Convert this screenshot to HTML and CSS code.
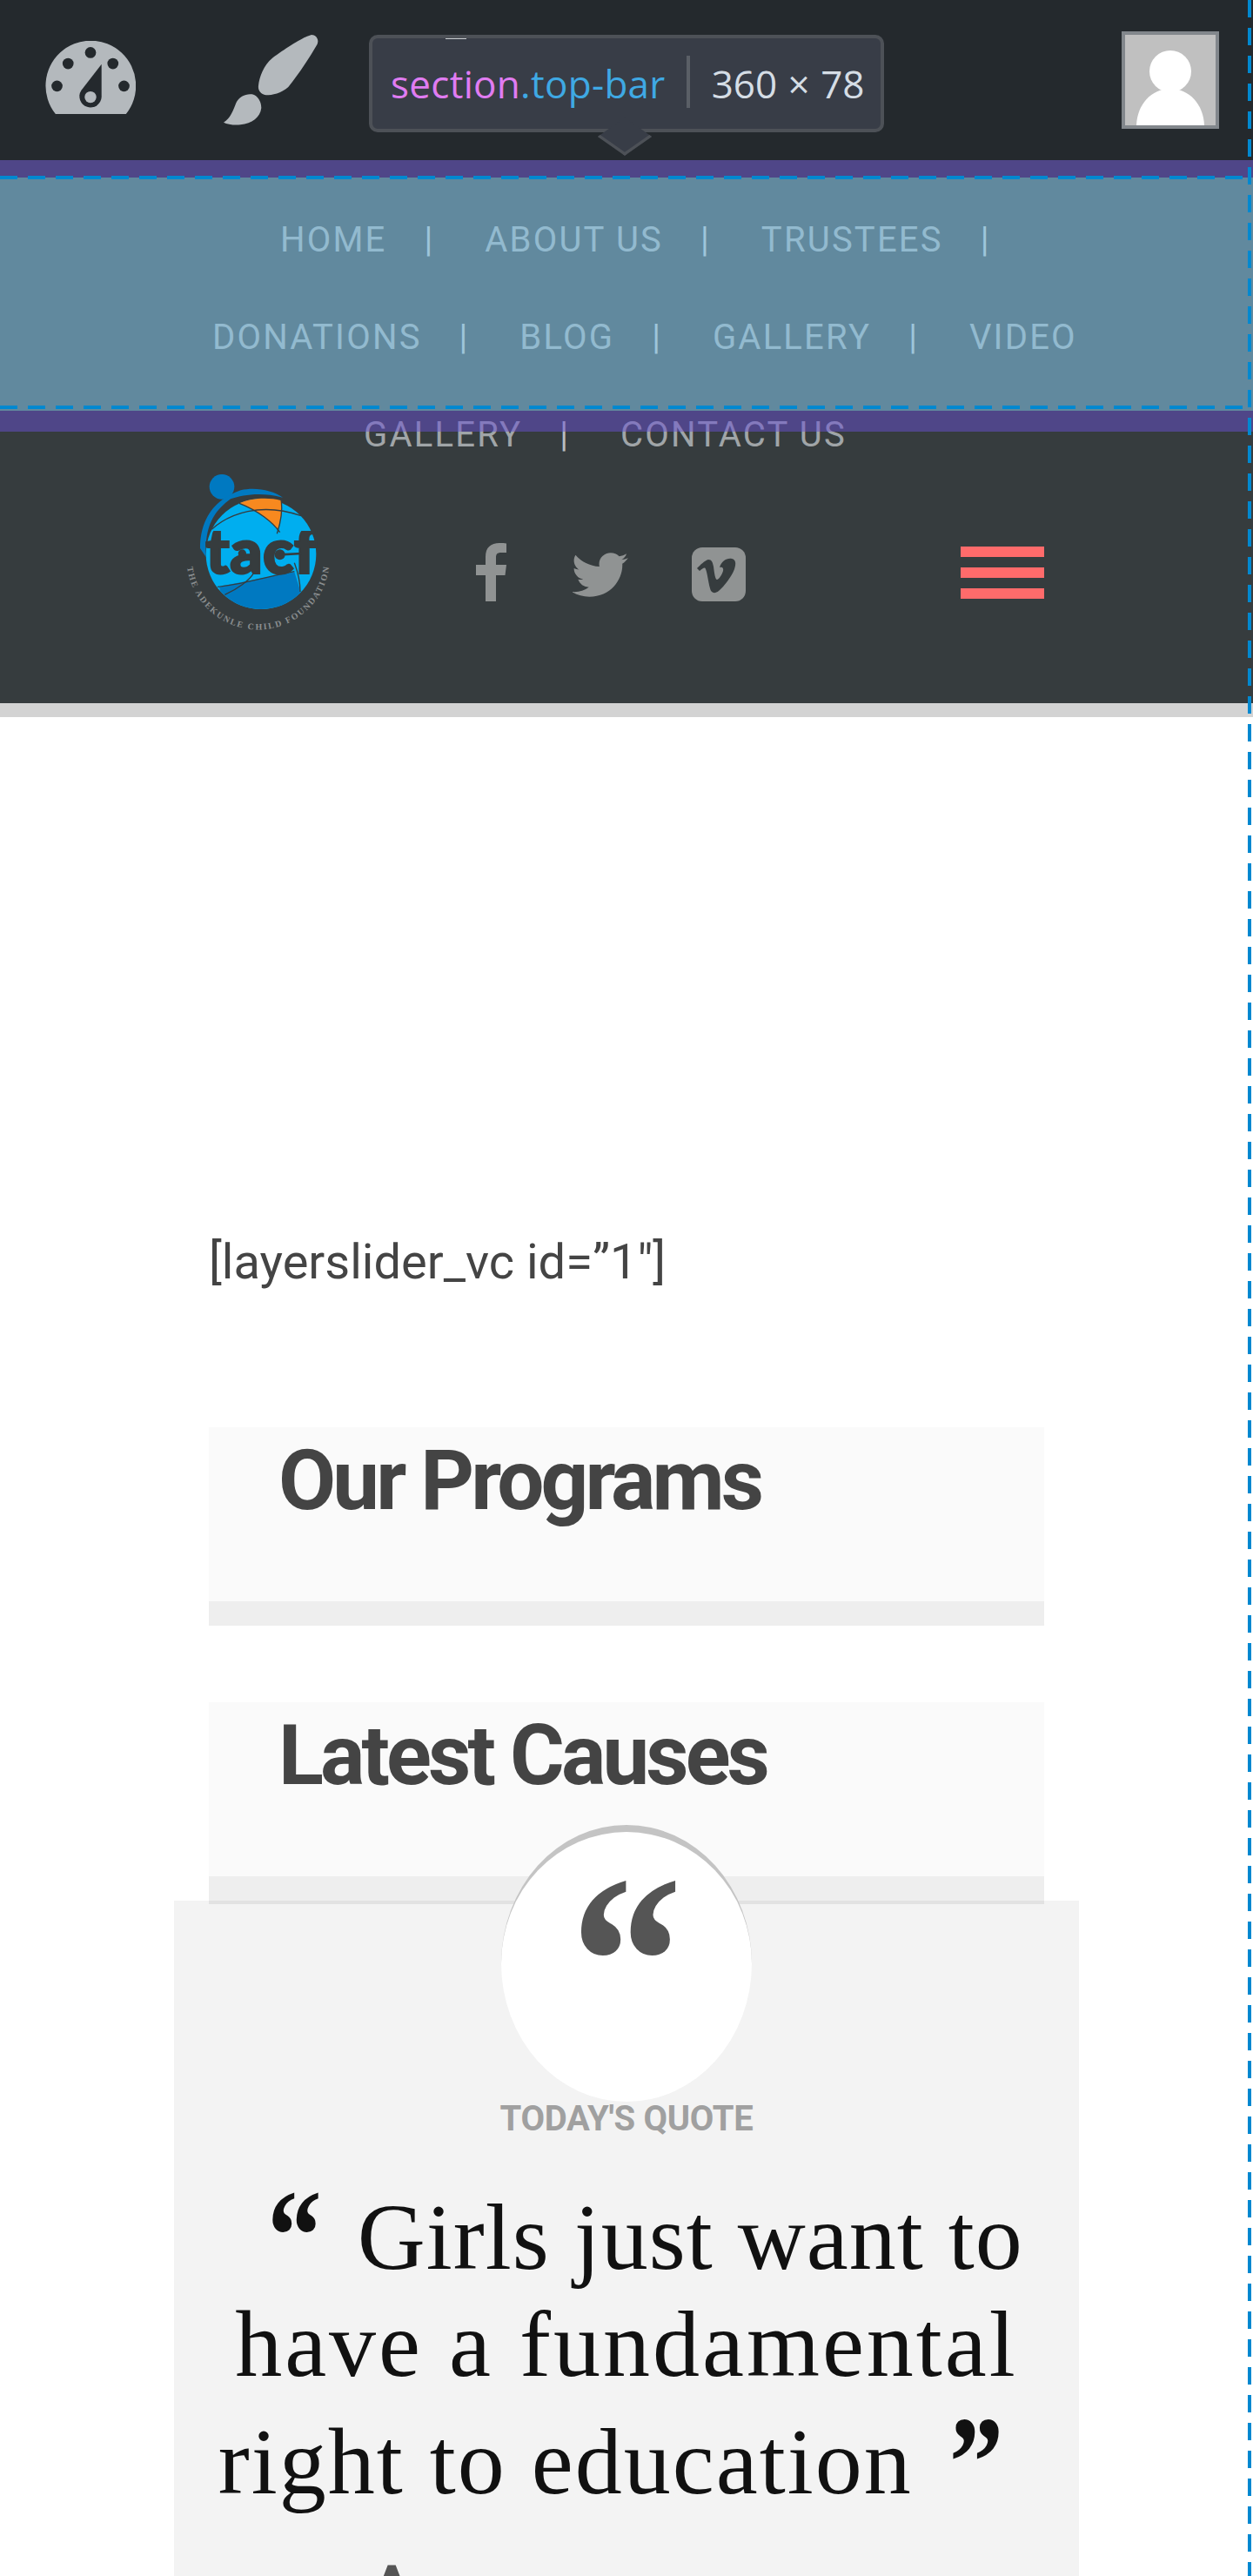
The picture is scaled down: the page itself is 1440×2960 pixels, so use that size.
FILE: index.html
```html
<!DOCTYPE html>
<html lang="en">
<head>
  <meta charset="UTF-8" />
  <title>The Adekunle Child Foundation</title>
  <link rel="stylesheet" href="styles.css">
</head>
<body>
<div class="page">

  <!-- admin bar -->
  <div class="admin-bar">
    <svg class="icon-gauge" viewBox="97 80 310 251">
      <path fill="#b4b9bd" d="M132 331A155 155 0 1 1 374 331Z"/>
      <g fill="#24292d">
        <circle cx="252" cy="120" r="19"/><circle cx="175" cy="158" r="19"/><circle cx="329" cy="158" r="19"/>
        <circle cx="137" cy="235" r="19"/><circle cx="367" cy="235" r="19"/>
        <path d="M290 160V272A38 38 0 1 1 220 250Z"/>
      </g>
      <circle fill="#b4b9bd" cx="252" cy="273" r="20"/>
    </svg>
    <svg class="icon-brush" viewBox="712 60 330 312">
      <path fill="#b4b9bd" d="M1015 60C1030 60 1042 75 1035 92C1010 135 975 190 935 240C910 262 880 268 858 268C838 265 830 250 832 235C835 205 850 165 880 140C920 110 975 75 1000 65Z"/>
      <path fill="#b4b9bd" d="M712 362C735 350 745 320 755 295C765 272 790 262 810 265C830 270 842 290 842 312C838 345 810 365 770 370C745 372 725 368 712 362Z"/>
    </svg>
    <svg class="avatar" viewBox="0 0 104 104">
      <rect width="104" height="104" fill="#c0c0c0"/>
      <ellipse cx="52" cy="42" rx="24" ry="24" fill="#fff"/>
      <path fill="#fff" d="M13 104C14 80 30 62 52 62C74 62 90 80 91 104Z"/>
    </svg>
  </div>

  <!-- site header -->
  <header class="site-header">
    <nav class="main-nav">
      <div class="nav-row row-one">
        <a>Home</a><i>|</i><a>About Us</a><i>|</i><a>Trustees</a><i>|</i>
      </div>
      <div class="nav-row row-two">
        <a>Donations</a><i>|</i><a>Blog</a><i>|</i><a>Gallery</a><i>|</i><a>Video</a>
      </div>
      <div class="nav-row row-three">
        <a>Gallery</a><i>|</i><a>Contact Us</a>
      </div>
    </nav>
    <div class="brand-row">
      <svg class="logo" viewBox="0 0 660 630">
        <defs>
          <clipPath id="markClip"><rect x="100" y="240" width="440" height="155"/></clipPath>
        </defs>
        <circle cx="195" cy="88" r="43" fill="#0079c1"/>
        <path fill="#0079c1" d="M120 300C120 200 170 130 260 100C310 88 370 100 405 125C330 105 270 115 225 130C170 170 135 220 140 330Z"/>
        <circle cx="330" cy="320" r="190" fill="#00aeef"/>
        <path fill="#0079c1" d="M185 432L445 382L467 452A190 190 0 0 1 190 448Z"/>
        <path fill="#f7891f" d="M255 145C300 125 360 125 398 135L403 172L388 235C360 205 320 170 255 145Z"/>
        <g fill="none" stroke="#363c3e" stroke-width="4">
          <path d="M160 235C220 180 330 140 468 188"/>
          <path d="M255 145C320 170 370 210 395 245"/>
          <path d="M400 135C405 180 395 220 385 250"/>
          <path d="M180 433C270 425 360 395 445 380"/>
          <path d="M205 460C250 440 290 410 305 385"/>
          <path d="M445 350C460 390 465 430 465 450"/>
        </g>
        <g clip-path="url(#markClip)">
          <text class="logo-mark" x="138" y="388" textLength="385" lengthAdjust="spacingAndGlyphs">tacf</text>
        </g>
        <circle cx="265" cy="318" r="14" fill="#363c3e"/>
        <circle cx="395" cy="322" r="18" fill="#363c3e"/>
        <path d="M395 322L470 318" stroke="#363c3e" stroke-width="8"/>
        <path id="logoArc" fill="none" d="M75 365A247 247 0 0 0 565 365"/>
        <text class="logo-name"><textPath href="#logoArc" textLength="712">THE ADEKUNLE CHILD FOUNDATION</textPath></text>
      </svg>
      <svg class="icon-fb" viewBox="0 0 35 67">
        <path fill="#909393" d="M11 67V37H0V25H11V16C11 5 17 0 27 0C30 0 33 0 35 .5V11H29C24 11 23 13 23 17V25H35L33.5 37H23V67Z"/>
      </svg>
      <svg class="icon-tw" viewBox="1.9 3.9 20.6 17.2" preserveAspectRatio="none">
        <path fill="#909393" d="M22.46 6c-.77.35-1.6.58-2.46.69.88-.53 1.56-1.37 1.88-2.38-.83.5-1.75.85-2.72 1.05C18.37 4.5 17.26 4 16 4c-2.35 0-4.27 1.92-4.27 4.29 0 .34.04.67.11.98C8.28 9.09 5.11 7.38 3 4.79c-.37.63-.58 1.37-.58 2.15 0 1.49.75 2.81 1.91 3.56-.71 0-1.37-.2-1.91-.5v.03c0 2.08 1.48 3.82 3.44 4.21a4.22 4.22 0 0 1-1.93.07 4.28 4.28 0 0 0 4 2.98 8.521 8.521 0 0 1-5.33 1.84c-.34 0-.68-.02-1.02-.06C3.44 20.29 5.7 21 8.12 21 16 21 20.33 14.46 20.33 8.79c0-.19 0-.37-.01-.56.84-.6 1.56-1.36 2.14-2.23z"/>
      </svg>
      <svg class="icon-vimeo" viewBox="0 0 62 62">
        <rect width="62" height="62" rx="12" fill="#909393"/>
        <path fill="#363c3e" d="M6 24C10 20 15 15 19 14C23 14 24 17 25 22C26 30 27 37 29 37C31 37 35 31 36 27C37 23 34 22 32 23C34 16 40 12 46 13C51 14 51 19 49 25C46 33 38 44 31 50C26 54 22 52 21 47C19 40 18 30 16 25C15 22 13 24 9 27Z"/>
      </svg>
      <div class="burger"><span></span><span></span><span></span></div>
    </div>
  </header>

  <!-- page content -->
  <main class="content">
    <p class="shortcode">[layerslider_vc id=”1″]</p>
    <section class="card">
      <h2>Our Programs</h2>
    </section>
    <section class="card card-last">
      <h2>Latest Causes</h2>
    </section>
  </main>

  <section class="quote-panel">
    <div class="quote-badge"><span>“</span></div>
    <h4>TODAY'S QUOTE</h4>
    <blockquote>
      <span class="quote-line line-one"><b>“</b>Girls just want to</span>
      <span class="quote-line line-two">have a fundamental</span>
      <span class="quote-line line-three">right to education<b>”</b></span>
    </blockquote>
    <p class="quote-author">Anonymous</p>
  </section>

  <!-- inspector highlight, lies over the page -->
  <div class="hl-box">
    <div class="hl-margin"></div>
    <div class="hl-content"></div>
    <div class="hl-margin hl-margin-low"></div>
    <div class="hl-dash hl-dash-top"></div>
    <div class="hl-dash hl-dash-bottom"></div>
  </div>
  <div class="hl-dash-side"></div>

  <div class="tooltip">
    <div class="tooltip-tick"></div>
    <span class="tag">section</span><span class="cls">.top-bar</span>
    <span class="divider"></span>
    <span class="size">360 × 78</span>
    <div class="tooltip-arrow"></div>
  </div>

</div>
</body>
</html>
```

FILE: styles.css
```css
html, body {
  margin: 0;
  padding: 0;
  background: #fff;
}

.page {
  position: relative;
  width: 1440px;
  height: 2960px;
  overflow: hidden;
  font-family: Roboto, "Liberation Sans", sans-serif;
}

/* admin bar */
.admin-bar {
  position: relative;
  z-index: 3;
  display: flex;
  align-items: flex-start;
  height: 184px;
  background: #24292d;
}

.icon-gauge {
  width: 104px;
  height: 84px;
  margin: 47px 0 0 52px;
}

.icon-brush {
  width: 110px;
  height: 104px;
  margin: 40px 0 0 101px;
}

.avatar {
  width: 104px;
  height: 104px;
  margin: 36px 0 0 922px;
  border: 4px solid #82878c;
}

/* header */
.site-header {
  height: 624px;
  background: #363c3e;
  border-bottom: 16px solid #d3d3d3;
}

.main-nav {
  padding-top: 36px;
}

.nav-row {
  display: flex;
  height: 112px;
  line-height: 112px;
  font-size: 40px;
  font-weight: 400;
  letter-spacing: 2.2px;
  text-transform: uppercase;
  color: #a0a5a8;
}

.nav-row i {
  font-style: normal;
  margin: 0 60px 0 43px;
  letter-spacing: 0;
  color: #b8bdc0;
}

.row-one { padding-left: 322px; }
.row-two { padding-left: 244px; }
.row-three { padding-left: 418px; }

.brand-row {
  display: flex;
  align-items: flex-start;
  height: 278px;
  margin-top: -26px;
  padding-left: 190px;
}

.logo {
  width: 220px;
  height: 210px;
}

.logo-mark {
  font-family: Lato, Roboto, sans-serif;
  font-weight: 900;
  font-size: 215px;
  fill: #363c3e;
  stroke: #363c3e;
  stroke-width: 6px;
}

.logo-name {
  font-family: "Liberation Serif", serif;
  font-weight: bold;
  font-size: 30px;
  fill: #8b8f90;
}

.icon-fb {
  width: 35px;
  height: 67px;
  margin: 94px 0 0 137px;
}

.icon-tw {
  width: 64px;
  height: 51px;
  margin: 105px 0 0 76px;
}

.icon-vimeo {
  width: 62px;
  height: 62px;
  margin: 99px 0 0 73px;
}

.burger {
  display: flex;
  flex-direction: column;
  gap: 12px;
  width: 96px;
  margin: 98px 0 0 247px;
}

.burger span {
  height: 12px;
  background: #ff6b6b;
}

/* content */
.content {
  width: 960px;
  margin-left: 240px;
}

.shortcode {
  margin: 586px 0 150px;
  font-size: 56px;
  line-height: 80px;
  color: #444;
}

.card {
  box-sizing: border-box;
  height: 228px;
  margin-bottom: 88px;
  padding: 13px 0 0 80px;
  background: #fafafa;
  border-bottom: 28px solid #eee;
}

.card-last {
  height: 232px;
  margin-bottom: 0;
  border-bottom-width: 32px;
}

.card h2 {
  margin: 0;
  font-size: 96px;
  line-height: 96px;
  font-weight: 700;
  letter-spacing: -3.9px;
  color: #444;
}

/* quote */
.quote-panel {
  position: relative;
  display: flow-root;
  box-sizing: border-box;
  width: 1040px;
  height: 780px;
  margin: -4px 0 0 200px;
  background: rgba(0, 0, 0, 0.047);
  text-align: center;
}

.quote-badge {
  box-sizing: border-box;
  width: 288px;
  height: 318px;
  margin: -87px auto 0;
  background: #fff;
  border-top: 8px solid #c4c4c4;
  border-radius: 50%;
  overflow: hidden;
}

.quote-badge span {
  display: block;
  height: 200px;
  font-family: "Liberation Serif", serif;
  font-weight: bold;
  font-size: 300px;
  line-height: 300px;
  color: #555;
  transform: translateY(2px) scale(0.86, 0.95);
}

.quote-panel h4 {
  margin: -4px 0 0;
  font-size: 40px;
  line-height: 48px;
  font-weight: 700;
  letter-spacing: -0.3px;
  color: #a0a0a0;
}

.quote-panel blockquote {
  margin: 57px 0 0;
  font-family: "Liberation Serif", serif;
  font-size: 108px;
  color: #111;
}

.quote-line {
  display: block;
  white-space: nowrap;
}

.quote-line b {
  display: inline-block;
  font-size: 125px;
  line-height: 0;
  letter-spacing: 0;
  vertical-align: -5px;
  transform: scaleY(1.2);
}

.line-one {
  height: 110px;
  line-height: 110px;
  padding-left: 43px;
  letter-spacing: 1px;
}

.line-one b { margin-right: 41px; }

.line-two {
  height: 135px;
  line-height: 135px;
  letter-spacing: 3px;
}

.line-three {
  height: 135px;
  line-height: 135px;
  padding-right: 36px;
  letter-spacing: 2px;
}

.line-three b {
  margin-left: 42px;
  vertical-align: -7px;
}

.quote-author {
  margin: 27px 0 0;
  font-size: 110px;
  line-height: 130px;
  letter-spacing: 3px;
  color: #555;
}

/* inspector highlight */
.hl-box {
  position: absolute;
  top: 184px;
  left: 0;
  z-index: 2;
  width: 1440px;
  height: 312px;
}

.hl-margin {
  height: 20px;
  background: rgba(104, 80, 210, 0.5);
}

.hl-margin-low {
  height: 24px;
}

.hl-content {
  height: 268px;
  background: rgba(135, 204, 240, 0.54);
}

.hl-dash {
  position: absolute;
  left: 0;
  width: 1428px;
  height: 4px;
  background: repeating-linear-gradient(to right, #0088d0 0, #0088d0 20px, transparent 20px, transparent 32px);
}

.hl-dash-top { top: 18px; }
.hl-dash-bottom { top: 282px; }

.hl-dash-side {
  position: absolute;
  top: 0;
  left: 1434px;
  z-index: 4;
  width: 4px;
  height: 2960px;
  background: repeating-linear-gradient(to bottom, #0088d0 0, #0088d0 20px, transparent 20px, transparent 32px);
}

/* tooltip */
.tooltip {
  position: absolute;
  top: 40px;
  left: 424px;
  z-index: 5;
  box-sizing: border-box;
  display: flex;
  align-items: center;
  width: 592px;
  height: 112px;
  padding-left: 21px;
  background: #383d47;
  border: 4px solid #4d5157;
  border-radius: 10px;
  font-family: "Open Sans", sans-serif;
  font-size: 44px;
  font-weight: 400;
  letter-spacing: 0.3px;
  line-height: 60px;
  white-space: nowrap;
}

.tag { color: #e07cf2; }
.cls { color: #3fa9e4; }
.size { color: #d5dde5; letter-spacing: 0; word-spacing: 1px; }

.divider {
  width: 4px;
  height: 60px;
  margin: -4px 25px 0 24px;
  background: #5a5f66;
}

.tooltip-tick {
  position: absolute;
  top: 0;
  left: 84px;
  width: 24px;
  height: 1px;
  background: #c9ccd0;
}

.tooltip-arrow {
  position: absolute;
  left: 268px;
  top: 97px;
  width: 44px;
  height: 44px;
  background: #383d47;
  border-right: 4px solid #4d5157;
  border-bottom: 4px solid #4d5157;
  transform: translateY(-6px) scaleY(0.7) rotate(45deg);
  transform-origin: center;
  box-sizing: border-box;
}
```
